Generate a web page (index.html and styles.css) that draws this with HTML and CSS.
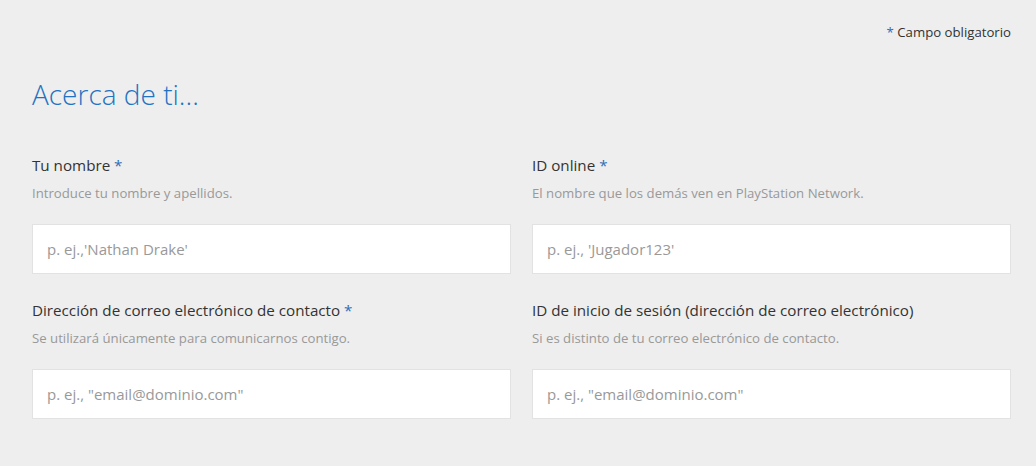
FILE: index.html
```html
<!DOCTYPE html>
<html lang="es">
<head>
<meta charset="utf-8">
<link rel="stylesheet" href="styles.css">
</head>
<body>
<div class="page">
  <div class="required-note"><span class="star">*</span> Campo obligatorio</div>
  <h1 class="title">Acerca de ti...</h1>
  <div class="grid">
    <div class="field">
      <div class="label">Tu nombre <span class="star">*</span></div>
      <div class="hint">Introduce tu nombre y apellidos.</div>
      <input class="input" type="text" placeholder="p. ej.,'Nathan Drake'">
    </div>
    <div class="field">
      <div class="label">ID online <span class="star">*</span></div>
      <div class="hint">El nombre que los demás ven en PlayStation Network.</div>
      <input class="input" type="text" placeholder="p. ej., 'Jugador123'">
    </div>
    <div class="field">
      <div class="label">Dirección de correo electrónico de contacto <span class="star">*</span></div>
      <div class="hint">Se utilizará únicamente para comunicarnos contigo.</div>
      <input class="input" type="text" placeholder="p. ej., &quot;email@dominio.com&quot;">
    </div>
    <div class="field">
      <div class="label">ID de inicio de sesión (dirección de correo electrónico)</div>
      <div class="hint">Si es distinto de tu correo electrónico de contacto.</div>
      <input class="input" type="text" placeholder="p. ej., &quot;email@dominio.com&quot;">
    </div>
  </div>
</div>
</body>
</html>
```
FILE: styles.css
```css
html, body {
  margin: 0;
  padding: 0;
  background: #eeeeee;
}
body {
  font-family: "Open Sans", "Noto Sans", "Liberation Sans", sans-serif;
  color: #333333;
}
.page {
  padding: 22px 25px 0 32px;
}
.required-note {
  text-align: right;
  font-size: 13.2px;
  line-height: 20px;
  color: #333;
}
.star {
  color: #2f6db5;
}
.title {
  margin: 32px 0 0 0;
  font-size: 28px;
  font-weight: 300;
  line-height: 40px;
  color: #1f73c2;
}
.grid {
  display: grid;
  grid-template-columns: 479px 479px;
  column-gap: 21px;
  row-gap: 26px;
  margin-top: 41px;
}
.field {
  display: flex;
  flex-direction: column;
}
.label {
  font-size: 15.2px;
  line-height: 20px;
  color: #333;
}
.hint {
  margin-top: 9px;
  font-size: 13.2px;
  line-height: 18px;
  color: #999999;
}
.input {
  margin-top: 22px;
  height: 50px;
  box-sizing: border-box;
  border: 1px solid #e2e2e2;
  background: #fff;
  padding: 0 14px;
  font-family: inherit;
  font-size: 15px;
  color: #333;
  outline: none;
}
.input::placeholder {
  color: #999999;
}
```
